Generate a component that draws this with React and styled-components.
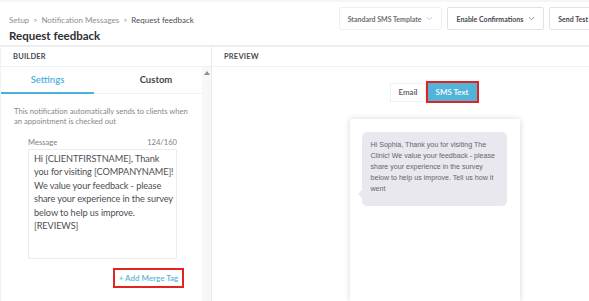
import styled, { createGlobalStyle } from "styled-components";

const GlobalStyle = createGlobalStyle`
	body {
		margin: 0;
		background: #ffffff;
		font-family: Lato, "Open Sans", sans-serif;
		overflow: hidden;
	}
`;

function Chevron({ light }) {
	return (
		<svg width="7" height="5" viewBox="0 0 7 5">
			<polyline
				points="0.8,1 3.5,3.8 6.2,1"
				fill="none"
				stroke={light ? "#c6c6cc" : "#8a8a90"}
				strokeWidth="0.9"
			/>
		</svg>
	);
}

export default function App() {
	return (
		<Page>
			<GlobalStyle />
			<TopBar>
				<TitleBlock>
					<Crumbs>
						<span>Setup</span>
						<Sep>&gt;</Sep>
						<span>Notification Messages</span>
						<Sep>&gt;</Sep>
						<Current>Request feedback</Current>
					</Crumbs>
					<Title>Request feedback</Title>
				</TitleBlock>
				<Actions>
					<HeadButton $muted>
						Standard SMS Template <Chevron light />
					</HeadButton>
					<HeadButton>
						Enable Confirmations <Chevron />
					</HeadButton>
					<HeadButton>Send Test</HeadButton>
				</Actions>
			</TopBar>

			<Main>
				<Builder>
					<SectionHead>Builder</SectionHead>
					<BuilderBody>
						<BuilderContent>
							<Tabs>
								<Tab $active>Settings</Tab>
								<Tab $offset>Custom</Tab>
							</Tabs>
							<Hint>
								This notification automatically sends to clients when an
								appointment is checked out
							</Hint>
							<Field>
								<FieldLabel>
									<span>Message</span>
									<span>124/160</span>
								</FieldLabel>
								<MessageBox>
									{`Hi [CLIENTFIRSTNAME], Thank
you for visiting [COMPANYNAME]!
We value your feedback - please
share your experience in the survey
below to help us improve.
[REVIEWS]`}
								</MessageBox>
								<MergeRow>
									<MergeTag>+ Add Merge Tag</MergeTag>
								</MergeRow>
							</Field>
						</BuilderContent>
						<ScrollTrack>
							<ScrollArrow />
						</ScrollTrack>
					</BuilderBody>
				</Builder>

				<Preview>
					<SectionHead>Preview</SectionHead>
					<PreviewBody>
						<Toggle>
							<ToggleButton>Email</ToggleButton>
							<ToggleButton $active>SMS Text</ToggleButton>
						</Toggle>
						<Phone>
							<Bubble>
								Hi Sophia, Thank you for visiting The Clinic! We value your
								feedback - please share your experience in the survey below to
								help us improve. Tell us how it went
							</Bubble>
						</Phone>
					</PreviewBody>
				</Preview>
			</Main>
		</Page>
	);
}

const Page = styled.div`
	width: 589px;
	height: 301px;
	display: flex;
	flex-direction: column;
	overflow: hidden;
`;

const TopBar = styled.div`
	height: 47px;
	display: flex;
	justify-content: space-between;
	align-items: flex-start;
	padding-left: 9px;
	border-top: 2px solid #f6f6f8;
	border-bottom: 2px solid #eeeef0;
	box-sizing: border-box;
	flex-shrink: 0;
`;

const TitleBlock = styled.div`
	display: flex;
	flex-direction: column;
	padding-top: 12px;
`;

const Crumbs = styled.div`
	font-size: 8px;
	color: #8d8d93;
	display: flex;
	align-items: center;
	height: 11px;
`;

const Sep = styled.span`
	margin: 0 4px;
	font-size: 7px;
`;

const Current = styled.span`
	color: #4d4d53;
`;

const Title = styled.div`
	margin-top: 4px;
	font-size: 11.5px;
	font-weight: 700;
	color: #2f2f35;
`;

const Actions = styled.div`
	display: flex;
	gap: 5px;
	padding-top: 5px;
	margin-right: -8px;
`;

const HeadButton = styled.div`
	height: 21px;
	padding: 0 8px;
	display: flex;
	align-items: center;
	gap: 5px;
	font-size: 7px;
	font-weight: 700;
	color: ${(p) => (p.$muted ? "#6e6e74" : "#48484e")};
	border: 1px solid ${(p) => (p.$muted ? "#f0f0f2" : "#e2e2e6")};
	border-radius: 2px;
	background: #ffffff;
	white-space: nowrap;
`;

const Main = styled.div`
	flex: 1;
	display: grid;
	grid-template-columns: 212px 1fr;
	min-height: 0;
`;

const Builder = styled.div`
	display: flex;
	flex-direction: column;
	border-right: 1px solid #ececef;
	border-left: 1px solid #f2f2f4;
	min-height: 0;
`;

const SectionHead = styled.div`
	height: 19px;
	flex-shrink: 0;
	display: flex;
	align-items: center;
	padding-left: 12px;
	font-size: 7.5px;
	font-weight: 700;
	letter-spacing: 0.2px;
	text-transform: uppercase;
	color: #4a4a50;
	border-bottom: 1px solid #f1f1f3;
`;

const BuilderBody = styled.div`
	flex: 1;
	display: flex;
	min-height: 0;
`;

const BuilderContent = styled.div`
	flex: 1;
	display: flex;
	flex-direction: column;
`;

const Tabs = styled.div`
	display: grid;
	grid-template-columns: 93px 1fr;
	height: 26px;
	border-bottom: 1px solid #f1f1f3;
`;

const Tab = styled.div`
	display: flex;
	align-items: center;
	justify-content: center;
	font-size: 9.5px;
	font-weight: ${(p) => (p.$active ? 600 : 700)};
	color: ${(p) => (p.$active ? "#4cb1dc" : "#45454b")};
	border-bottom: 2px solid ${(p) => (p.$active ? "#4cb1dc" : "transparent")};
	margin-bottom: -1px;
	padding-left: ${(p) => (p.$offset ? "16px" : "0")};
`;

const Hint = styled.div`
	margin: 12px 14px 0 13px;
	font-size: 7.6px;
	line-height: 10px;
	color: #86868c;
`;

const Field = styled.div`
	margin: 12px 0 0 27px;
	width: 149px;
	display: flex;
	flex-direction: column;
`;

const FieldLabel = styled.div`
	display: flex;
	justify-content: space-between;
	font-size: 7.6px;
	color: #808086;
	height: 9px;
	line-height: 9px;
`;

const MessageBox = styled.div`
	margin-top: 2px;
	height: 110px;
	box-sizing: border-box;
	border: 1px solid #ececef;
	padding: 2px 0 0 5px;
	font-size: 9.2px;
	letter-spacing: -0.1px;
	line-height: 13.4px;
	color: #4e4e54;
	white-space: pre;
	overflow: hidden;
`;

const MergeRow = styled.div`
	display: flex;
	justify-content: flex-end;
	margin-top: 9px;
	margin-right: -7px;
`;

const MergeTag = styled.div`
	height: 20px;
	width: 71px;
	box-sizing: border-box;
	border: 2px solid #e3231f;
	display: flex;
	align-items: center;
	justify-content: center;
	font-size: 8px;
	font-weight: 600;
	color: #59b5dc;
`;

const ScrollTrack = styled.div`
	width: 9px;
	background: #f7f7f8;
	display: flex;
	justify-content: center;
	padding-top: 4px;
`;

const ScrollArrow = styled.div`
	width: 0;
	height: 0;
	border-left: 3.5px solid transparent;
	border-right: 3.5px solid transparent;
	border-bottom: 4px solid #8e8e92;
`;

const Preview = styled.div`
	display: flex;
	flex-direction: column;
	min-height: 0;
`;

const PreviewBody = styled.div`
	flex: 1;
	display: flex;
	flex-direction: column;
	align-items: center;
	padding-left: 68px;
	padding-top: 14px;
	min-height: 0;
	overflow: hidden;
`;

const Toggle = styled.div`
	display: flex;
	align-items: center;
`;

const ToggleButton = styled.div`
	height: ${(p) => (p.$active ? "18px" : "17px")};
	box-sizing: content-box;
	padding: 0 ${(p) => (p.$active ? "8px" : "7px")};
	display: flex;
	align-items: center;
	font-size: 8px;
	font-weight: 600;
	color: ${(p) => (p.$active ? "#ffffff" : "#55555b")};
	background: ${(p) => (p.$active ? "#52b3d9" : "#ffffff")};
	border: ${(p) => (p.$active ? "2px solid #e3231f" : "1px solid #f0f0f2")};
`;

const Phone = styled.div`
	margin-top: 16px;
	width: 170px;
	flex: 1;
	background: #ffffff;
	box-shadow: 0 0 6px rgba(0, 0, 0, 0.16);
	padding: 13px 13px 0 12px;
	box-sizing: border-box;
`;

const Bubble = styled.div`
	position: relative;
	background: #e8e8ee;
	border-radius: 5px;
	padding: 8px 6px 11px 9px;
	font-family: "Liberation Sans", Arial, sans-serif;
	font-size: 7.1px;
	line-height: 11px;
	color: #66666c;

	&::before {
		content: "";
		position: absolute;
		left: -4px;
		bottom: 8px;
		border-top: 4px solid transparent;
		border-bottom: 4px solid transparent;
		border-right: 4px solid #e8e8ee;
	}
`;
